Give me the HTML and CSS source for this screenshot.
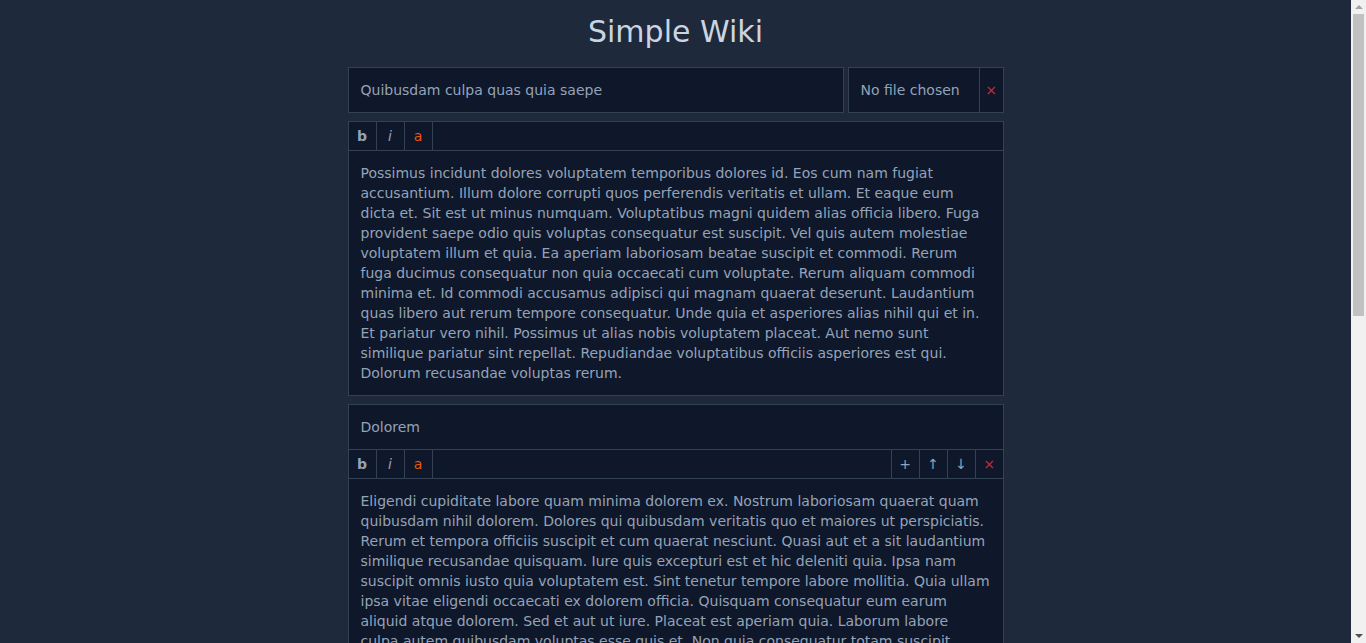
FILE: index.html
```html
<!DOCTYPE html>
<html lang="en">
<head>
<meta charset="utf-8">
<title>Simple Wiki</title>
<link rel="stylesheet" href="styles.css">
</head>
<body>
<main class="wiki">
  <h1 class="title">Simple Wiki</h1>
  <div class="head-row">
    <div class="field grow">Quibusdam culpa quas quia saepe</div>
    <div class="file">
      <span class="file-name">No file chosen</span>
      <button class="btn btn-x">×</button>
    </div>
  </div>

  <section class="editor">
    <div class="toolbar">
      <button class="btn btn-b">b</button>
      <button class="btn btn-i">i</button>
      <button class="btn btn-a">a</button>
    </div>
    <div class="text">Possimus incidunt dolores voluptatem temporibus dolores id. Eos cum nam fugiat accusantium. Illum dolore corrupti quos perferendis veritatis et ullam. Et eaque eum dicta et. Sit est ut minus numquam. Voluptatibus magni quidem alias officia libero. Fuga provident saepe odio quis voluptas consequatur est suscipit. Vel quis autem molestiae voluptatem illum et quia. Ea aperiam laboriosam beatae suscipit et commodi. Rerum fuga ducimus consequatur non quia occaecati cum voluptate. Rerum aliquam commodi minima et. Id commodi accusamus adipisci qui magnam quaerat deserunt. Laudantium quas libero aut rerum tempore consequatur. Unde quia et asperiores alias nihil qui et in. Et pariatur vero nihil. Possimus ut alias nobis voluptatem placeat. Aut nemo sunt similique pariatur sint repellat. Repudiandae voluptatibus officiis asperiores est qui. Dolorum recusandae voluptas rerum.</div>
  </section>

  <section class="editor">
    <div class="field">Dolorem</div>
    <div class="toolbar">
      <button class="btn btn-b">b</button>
      <button class="btn btn-i">i</button>
      <button class="btn btn-a">a</button>
      <span class="spacer"></span>
      <button class="btn btn-r">+</button>
      <button class="btn btn-r">↑</button>
      <button class="btn btn-r">↓</button>
      <button class="btn btn-r btn-x">×</button>
    </div>
    <div class="text">Eligendi cupiditate labore quam minima dolorem ex. Nostrum laboriosam quaerat quam quibusdam nihil dolorem. Dolores qui quibusdam veritatis quo et maiores ut perspiciatis. Rerum et tempora officiis suscipit et cum quaerat nesciunt. Quasi aut et a sit laudantium similique recusandae quisquam. Iure quis excepturi est et hic deleniti quia. Ipsa nam suscipit omnis iusto quia voluptatem est. Sint tenetur tempore labore mollitia. Quia ullam ipsa vitae eligendi occaecati ex dolorem officia. Quisquam consequatur eum earum aliquid atque dolorem. Sed et aut ut iure. Placeat est aperiam quia. Laborum labore culpa autem quibusdam voluptas esse quis et. Non quia consequatur totam suscipit. Voluptatem ea voluptas quia. Dolorem est ut ipsum odit. Rerum sint aut nobis nulla et. Modi eum nisi voluptas quia reiciendis explicabo.</div>
  </section>

  <section class="editor">
    <div class="field">Voluptas</div>
    <div class="toolbar">
      <button class="btn btn-b">b</button>
      <button class="btn btn-i">i</button>
      <button class="btn btn-a">a</button>
      <span class="spacer"></span>
      <button class="btn btn-r">+</button>
      <button class="btn btn-r">↑</button>
      <button class="btn btn-r">↓</button>
      <button class="btn btn-r btn-x">×</button>
    </div>
    <div class="text">Et sit accusamus quia officiis nam. Quia voluptatem dolores quis rerum est nihil. Magni in aut dignissimos et eum. Praesentium veniam ut molestiae et. Voluptas qui vel at quia dolorem. Et aut eius est debitis accusantium aut. Sunt quas est id qui. Omnis consequatur sed rerum voluptas quis sint. Ut dolores sit ipsa. Dolorem ut consequatur quia nobis ad. Et sit est enim esse maxime. Qui architecto dolor et delectus quisquam aut. Sed et consequatur quia est quia. Deleniti quia et numquam rem velit rerum.</div>
  </section>
</main>

<div class="scrollbar" aria-hidden="true">
  <span class="sb-arrow sb-up"></span>
  <span class="sb-thumb"></span>
  <span class="sb-arrow sb-down"></span>
</div>
</body>
</html>
```

FILE: styles.css
```css
html, body {
  margin: 0;
  padding: 0;
  background: #1e293b;
}

body {
  font-family: "DejaVu Sans", sans-serif;
  font-size: 14px;
  line-height: 20px;
  color: #94a3b8;
  padding-right: 15px;
  padding-bottom: 40px;
}

.wiki {
  width: 656px;
  margin: 0 auto;
  display: flex;
  flex-direction: column;
  gap: 8px;
}

.title {
  margin: 12px 0 7px;
  font-size: 30px;
  font-weight: normal;
  line-height: 40px;
  text-align: center;
  color: #cbd5e1;
}

.head-row {
  display: flex;
  gap: 4px;
}

.field {
  background: #0f172a;
  border: 1px solid #334155;
  padding: 12px;
  color: #94a3b8;
}

.grow {
  flex: 1;
}

.file {
  display: flex;
  width: 154px;
  background: #0f172a;
  border: 1px solid #334155;
}

.file-name {
  flex: 1;
  padding: 12px;
  white-space: nowrap;
}

.btn {
  font-family: "DejaVu Sans", sans-serif;
  font-size: 14px;
  line-height: 20px;
  background: transparent;
  border: 0;
  padding: 0;
  color: #94a3b8;
  cursor: pointer;
  width: 28px;
}

.file .btn-x {
  width: 24px;
  border-left: 1px solid #334155;
}

.editor {
  display: flex;
  flex-direction: column;
  background: #0f172a;
  border: 1px solid #334155;
}

.editor .field {
  border: 0;
  border-bottom: 1px solid #334155;
}

.toolbar {
  display: flex;
  height: 28px;
  border-bottom: 1px solid #334155;
}

.toolbar .btn {
  height: 28px;
  border-right: 1px solid #334155;
}

.toolbar .btn-r {
  border-right: 0;
  border-left: 1px solid #334155;
}

.spacer {
  flex: 1;
}

.btn-b {
  font-weight: bold;
}

.btn-i {
  font-style: italic;
}

.btn-a {
  color: #ea580c;
}

.btn-x {
  color: #dc2626;
}

.text {
  padding: 12px;
  color: #94a3b8;
}

/* classic scrollbar drawn over the right edge */
.scrollbar {
  position: fixed;
  top: 0;
  right: 0;
  bottom: 0;
  width: 15px;
  background: #f1f1f1;
  display: flex;
  flex-direction: column;
  align-items: center;
}

.sb-arrow {
  width: 0;
  height: 0;
  border-left: 4px solid transparent;
  border-right: 4px solid transparent;
}

.sb-up {
  margin-top: 5px;
  border-bottom: 4px solid #a3a3a3;
}

.sb-down {
  margin-top: auto;
  margin-bottom: 5px;
  border-top: 4px solid #505050;
}

.sb-thumb {
  margin-top: 5px;
  width: 11px;
  height: 302px;
  background: #c1c1c1;
}
```
